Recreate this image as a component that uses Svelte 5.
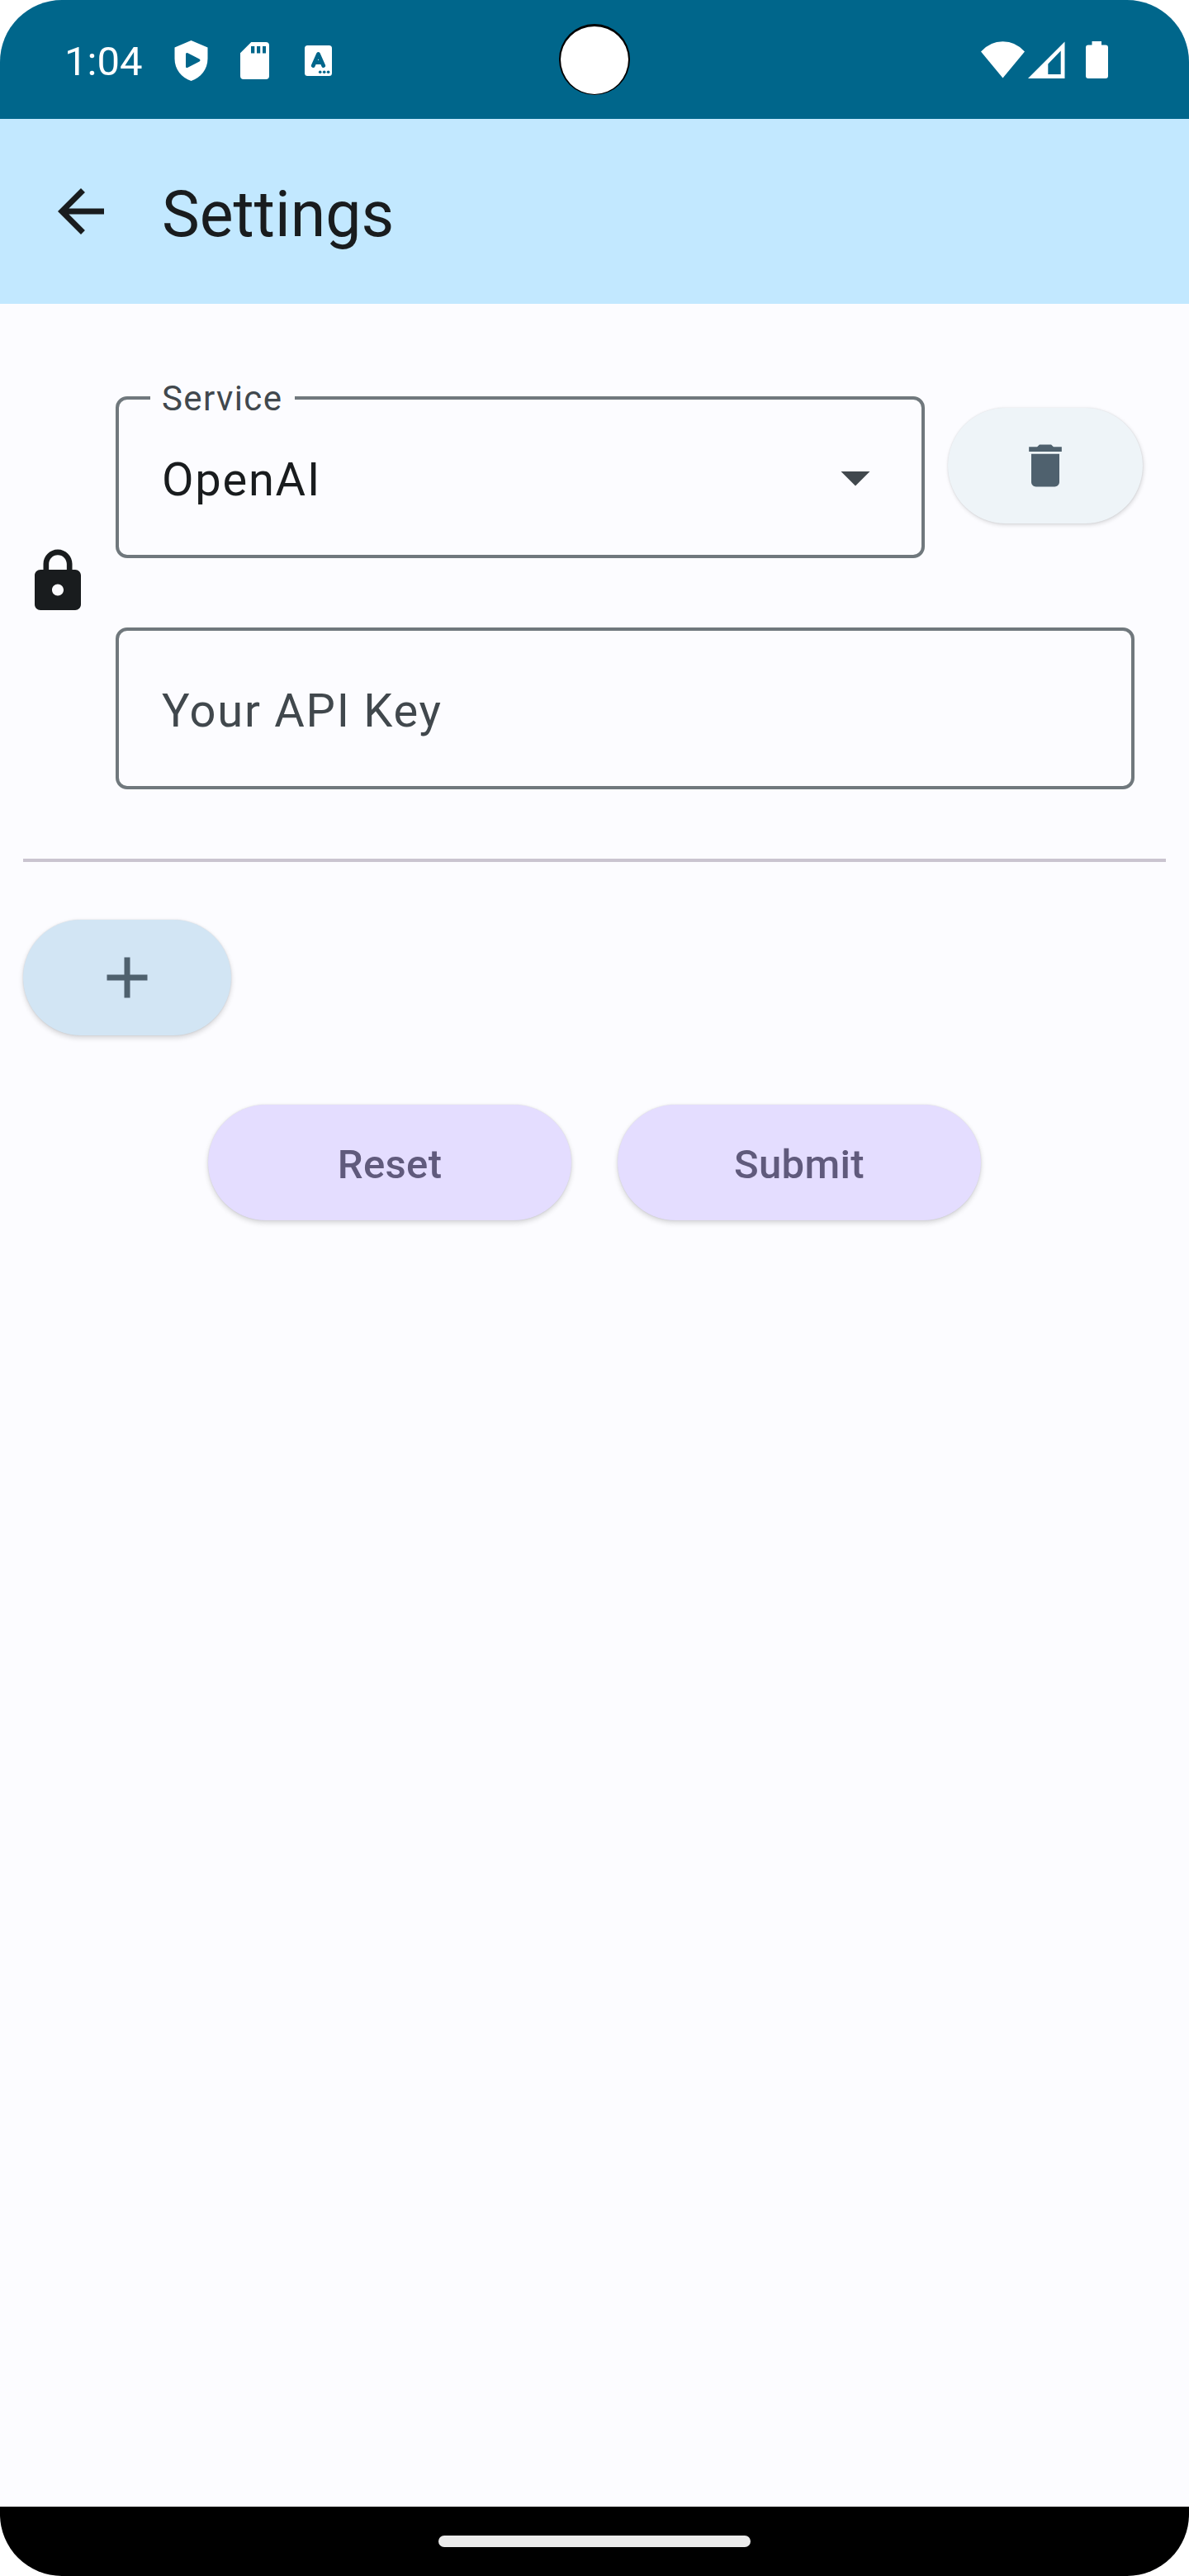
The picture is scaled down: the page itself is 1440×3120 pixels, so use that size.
<script>
  let service = $state('OpenAI');
  const actions = ['Reset', 'Submit'];
</script>

<div class="screen">
  <header class="status">
    <div class="status-left">
      <span class="time">1:04</span>
      <svg class="shield" viewBox="0 0 41 49"><path fill-rule="evenodd" d="M20.500 0L40.500 8.500V22C40.500 35 32 45 20.500 49C9 45 .5 35 .5 22V8.500ZM14 16.500V31.500Q14 34 16.500 32.800L30.500 25.500Q32.500 24 30.500 22.500L16.500 15.200Q14 14.200 14 16.500Z" /></svg>
      <svg class="sd" viewBox="0 0 35 45"><path fill-rule="evenodd" d="M13.300 0H31Q35 0 35 4V41Q35 45 31 45H4Q0 45 0 41V13.300ZM13 5V13.500H17.300V5ZM20 5V13.500H24.200V5ZM27 5V13.500H31V5Z" /></svg>
      <svg class="keyboard" viewBox="0 0 33 37">
        <rect width="33" height="37" rx="3.500" />
        <path class="cut" d="M10.300 24.500L16.500 10.500L22.700 24.500M12.500 20.500H20.500" />
        <g class="dots"><circle cx="18.700" cy="32.300" r="1.800" /><circle cx="23.700" cy="32.300" r="1.800" /><circle cx="28.600" cy="32.300" r="1.800" /></g>
      </svg>
    </div>
    <div class="camera"></div>
    <div class="status-right">
      <svg class="wifi" viewBox="0 0 53 45"><path d="M0 12.500Q11 .3 26.500 .3T53 12.500L26.500 44.500Z" /></svg>
      <svg class="signal" viewBox="0 0 45 45"><path fill-rule="evenodd" d="M0 45L44.500 .5V45ZM24.300 27.500V40H39.700V11.500Z" /></svg>
      <svg class="battery" viewBox="0 0 27 45"><path d="M7.500 0H19V4.500H24Q27 4.500 27 7.500V42Q27 45 24 45H3Q0 45 0 42V7.500Q0 4.500 3 4.500H7.500Z" /></svg>
    </div>
  </header>

  <nav class="appbar">
    <svg class="icon" viewBox="0 0 24 24"><path d="M20 11H7.830l5.590-5.590L12 4l-8 8 8 8 1.410-1.410L7.830 13H20v-2z" /></svg>
    <h1>Settings</h1>
  </nav>

  <main>
    <section class="entry">
      <svg class="icon" viewBox="0 0 24 24"><path d="M18 8h-1V6c0-2.760-2.240-5-5-5S7 3.240 7 6v2H6c-1.100 0-2 .9-2 2v10c0 1.100.9 2 2 2h12c1.100 0 2-.9 2-2V10c0-1.100-.9-2-2-2zm-6 9c-1.100 0-2-.9-2-2s.9-2 2-2 2 .9 2 2-.9 2-2 2zm3.100-9H8.900V6c0-1.710 1.390-3.100 3.100-3.100s3.100 1.390 3.100 3.100v2z" /></svg>
      <div class="fields">
        <div class="service-row">
          <div class="field select">
            <span class="label">Service</span>
            <span class="value">{service}</span>
            <svg class="icon" viewBox="0 0 24 24"><path d="M7 10l5 5 5-5z" /></svg>
          </div>
          <button class="pill delete" aria-label="Delete service">
            <svg viewBox="0 0 24 24"><path d="M6 19c0 1.100.9 2 2 2h8c1.100 0 2-.9 2-2V7H6v12zM19 4h-3.500l-1-1h-5l-1 1H5v2h14V4z" /></svg>
          </button>
        </div>
        <div class="field key"><span class="value">Your API Key</span></div>
      </div>
    </section>

    <div class="divider"></div>

    <button class="pill add" aria-label="Add service">
      <svg class="icon" viewBox="0 0 24 24"><path d="M19 13h-6v6h-2v-6H5v-2h6V5h2v6h6v2z" /></svg>
    </button>

    <div class="actions">
      {#each actions as action}
        <button class="pill action"><span>{action}</span></button>
      {/each}
    </div>
  </main>

  <footer><div class="handle"></div></footer>
</div>

<style>
  :global(body) {
    margin: 0;
    background: #fff;
  }
  .screen {
    width: 1440px;
    height: 3120px;
    display: flex;
    flex-direction: column;
    overflow: hidden;
    border-radius: 75px;
    background: #fcfcff;
    color: #191c1e;
    font-family: Roboto, sans-serif;
  }
  svg {
    display: block;
    flex: none;
    fill: currentColor;
  }
  .icon {
    width: 84px;
    height: 84px;
  }
  .status {
    position: relative;
    height: 144px;
    flex: none;
    display: flex;
    justify-content: space-between;
    box-sizing: border-box;
    padding: 0 98px 0 77px;
    background: #00668b;
    color: #fff;
  }
  .status-left,
  .status-right {
    display: flex;
    align-items: center;
    height: 147px;
  }
  .time {
    width: 133px;
    padding: 2px 0 0 1px;
    font-size: 49px;
    line-height: 58px;
  }
  .shield { width: 41px; height: 49px; margin-right: 39px; }
  .sd { width: 35px; height: 45px; margin-right: 43px; }
  .keyboard { width: 33px; height: 37px; }
  .cut {
    fill: none;
    stroke: #00668b;
    stroke-width: 4.800;
    stroke-linecap: round;
    stroke-linejoin: round;
  }
  .dots { fill: #00668b; }
  .status-right { height: 144px; }
  .wifi { width: 53px; height: 45px; margin-right: 4px; }
  .signal { width: 45px; height: 45px; margin-right: 25px; }
  .battery { width: 27px; height: 45px; }
  .camera {
    position: absolute;
    left: 677px;
    top: 29px;
    width: 82px;
    height: 82px;
    border: 2px solid #000;
    border-top-width: 3px;
    border-bottom-width: 1px;
    border-radius: 50%;
    background: #fff;
  }
  .appbar {
    height: 224px;
    flex: none;
    display: flex;
    align-items: center;
    gap: 56px;
    box-sizing: border-box;
    padding-left: 56px;
    background: #c2e8ff;
  }
  h1 {
    margin: 0;
    padding-top: 8px;
    font-size: 77px;
    font-weight: 400;
    line-height: 98px;
  }
  main {
    flex: 1;
    padding: 112px 28px 0;
  }
  .entry {
    display: flex;
    align-items: center;
    gap: 28px;
    height: 476px;
  }
  .entry > .icon { margin-bottom: 28px; }
  .fields {
    display: flex;
    flex-direction: column;
    gap: 84px;
  }
  .service-row {
    display: flex;
    align-items: flex-start;
    gap: 28px;
  }
  .field {
    position: relative;
    display: flex;
    align-items: center;
    box-sizing: border-box;
    height: 196px;
    border: 4px solid #70787d;
    border-radius: 14px;
    padding: 0 38px 0 52px;
    color: #41484d;
  }
  .select {
    width: 980px;
    justify-content: space-between;
  }
  .key { width: 1234px; }
  .value {
    padding-top: 6px;
    font-size: 56px;
    line-height: 84px;
    letter-spacing: 1.750px;
  }
  .select .value { color: #191c1e; }
  .label {
    position: absolute;
    left: 38px;
    top: -29px;
    width: 161px;
    padding-left: 14px;
    background: #fcfcff;
    font-size: 42px;
    line-height: 56px;
    letter-spacing: 1.400px;
  }
  .pill {
    display: flex;
    align-items: center;
    justify-content: center;
    height: 140px;
    padding: 0;
    border: 0;
    border-radius: 70px;
    font-family: inherit;
    box-shadow: 0 3px 6px rgba(0, 0, 0, 0.16), 0 0 2px rgba(0, 0, 0, 0.12);
  }
  .delete {
    width: 236px;
    margin-top: 14px;
    background: #eef4f8;
    color: #4f616e;
    box-shadow: 1px 2px 5px rgba(0, 0, 0, 0.14), 0 0 2px rgba(0, 0, 0, 0.1);
  }
  .delete svg {
    width: 68px;
    height: 68px;
  }
  .divider {
    height: 4px;
    margin: 84px 0 70px;
    background: #cac4d0;
  }
  .add {
    width: 252px;
    background: #d2e5f4;
    color: #4f616e;
  }
  .actions {
    display: flex;
    justify-content: center;
    gap: 56px;
    margin-top: 84px;
  }
  .action {
    width: 440px;
    background: #e4ddff;
    color: #605a7c;
    font-size: 49px;
    font-weight: 500;
    line-height: 70px;
    letter-spacing: 0.350px;
  }
  .action span { padding-top: 6px; }
  footer {
    height: 84px;
    flex: none;
    display: flex;
    align-items: center;
    justify-content: center;
    background: #000;
  }
  .handle {
    width: 378px;
    height: 14px;
    border-radius: 7px;
    background: #ebebeb;
  }
</style>
